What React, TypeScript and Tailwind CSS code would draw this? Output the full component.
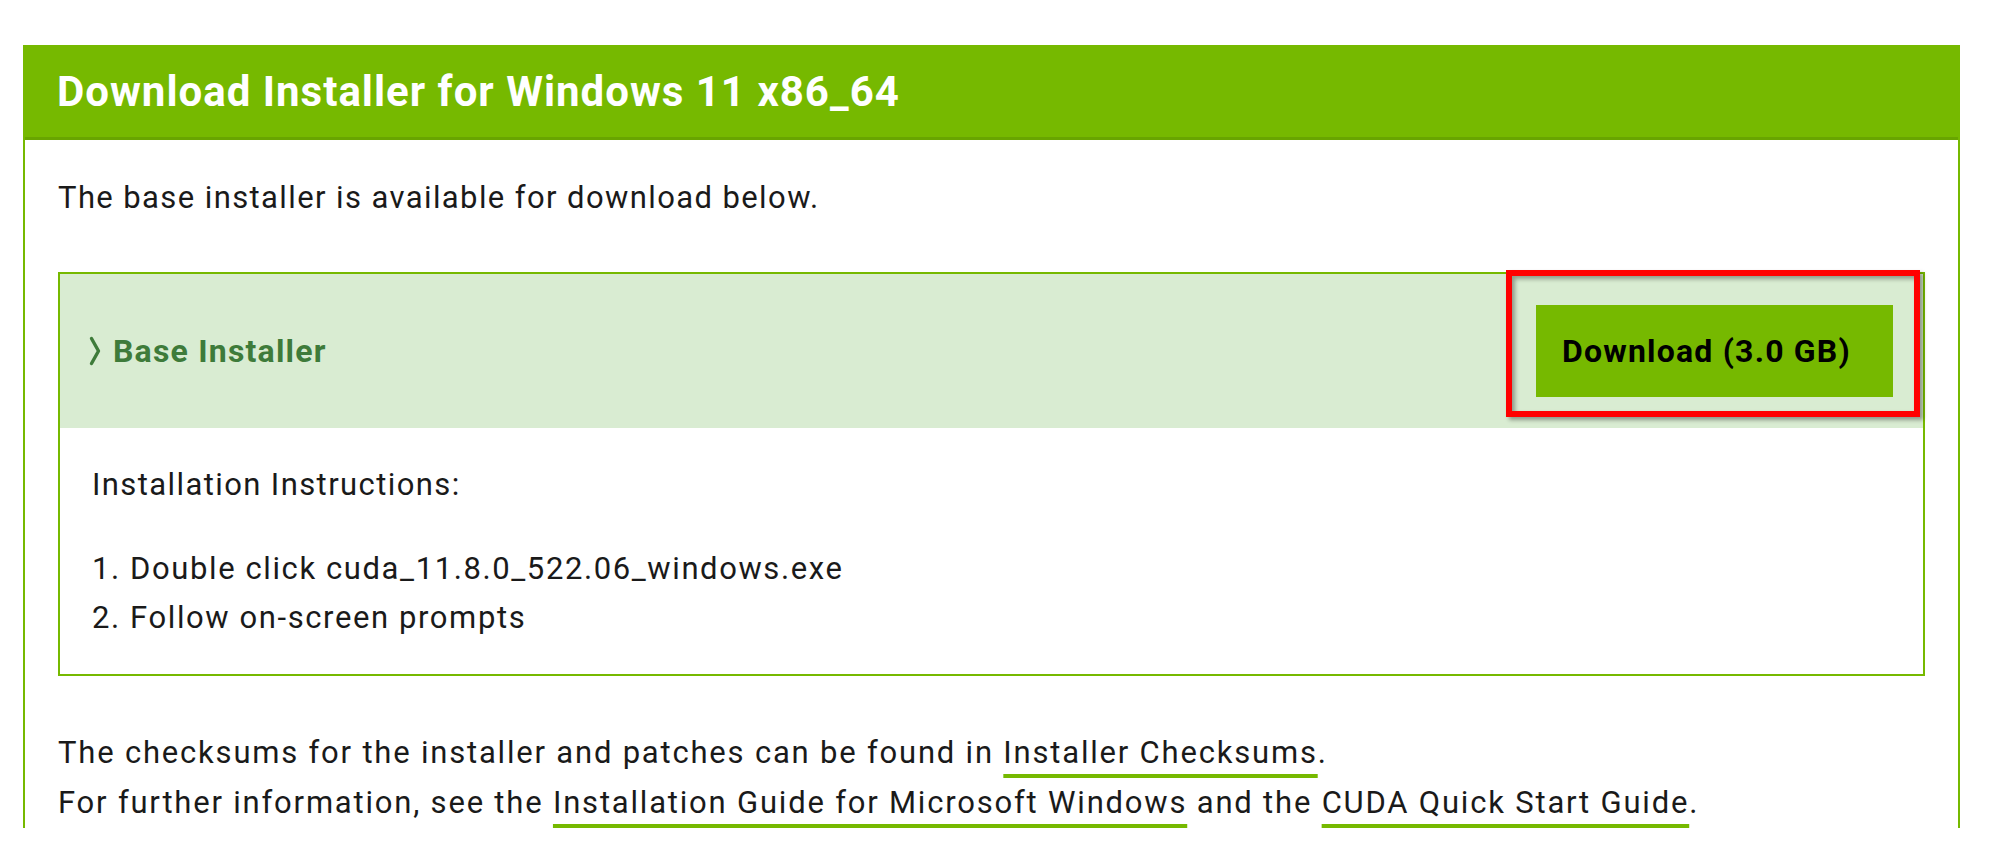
import React from "react";

const steps = ["1. Double click cuda_11.8.0_522.06_windows.exe", "2. Follow on-screen prompts"];

const linkClass =
  "underline decoration-[#76b900] decoration-4 underline-offset-[11px] [text-decoration-skip-ink:none]";

const Chevron = () => (
  <svg width="12" height="30" viewBox="0 0 12 30" fill="none" className="shrink-0">
    <path d="M2.5 2.5 L9.5 15 L2.5 27.5" stroke="#3e7b3a" strokeWidth="3.4" strokeLinecap="round" strokeLinejoin="round" />
  </svg>
);

const App = () => {
  return (
    <div className="min-h-screen bg-white pt-[45px] pl-[23px] font-['Roboto',sans-serif] text-[#1a1a1a]">
      <div className="w-[1937px] border-2 border-b-0 border-[#76b900] bg-white">
        <div className="h-[93px] flex items-center bg-[#76b900] border-b-[3px] border-[#68a500] pl-[32px]">
          <h1 className="text-white font-bold text-[42px] tracking-[1px] leading-none">
            Download Installer for Windows 11 x86_64
          </h1>
        </div>

        <div className="px-[33px] pt-[34px] text-[31px] tracking-[1.4px]">
          <p className="leading-[48px]">The base installer is available for download below.</p>

          <div className="mt-[50px] border-2 border-[#76b900]">
            <div className="h-[154px] bg-[#d9ecd2] flex items-center justify-between pl-[29px] pr-[30px]">
              <div className="flex items-center gap-[12px]">
                <Chevron />
                <span className="font-bold text-[32px] tracking-[1.2px] text-[#3e7b3a]">Base Installer</span>
              </div>
              <div className="relative">
                <button className="w-[357px] h-[92px] bg-[#76b900] flex items-center pl-[26px] text-black font-bold text-[32px] tracking-[1.2px]">
                  Download (3.0 GB)
                </button>
                <div className="absolute -left-[30px] -right-[27px] -top-[35px] -bottom-[20px] border-[6px] border-[#ff0000] shadow-[3px_3px_4px_rgba(0,0,0,0.35),inset_3px_3px_4px_rgba(0,0,0,0.35)] pointer-events-none" />
              </div>
            </div>

            <div className="pl-[32px] pt-[33px] pb-[32px]">
              <p className="leading-[48px]">Installation Instructions:</p>
              <div className="mt-[35px] tracking-[1.6px]">
                {steps.map((s, i) => (
                  <div key={i} className="leading-[49px]">
                    {s}
                  </div>
                ))}
              </div>
            </div>
          </div>

          <div className="mt-[52px] leading-[50px] tracking-[1.8px]">
            <p>
              The checksums for the installer and patches can be found in{" "}
              <a className={linkClass}>Installer Checksums</a>.
            </p>
            <p>
              For further information, see the{" "}
              <a className={linkClass}>Installation Guide for Microsoft Windows</a> and the{" "}
              <a className={linkClass}>CUDA Quick Start Guide</a>.
            </p>
          </div>
        </div>
      </div>
    </div>
  );
};

export default App;
